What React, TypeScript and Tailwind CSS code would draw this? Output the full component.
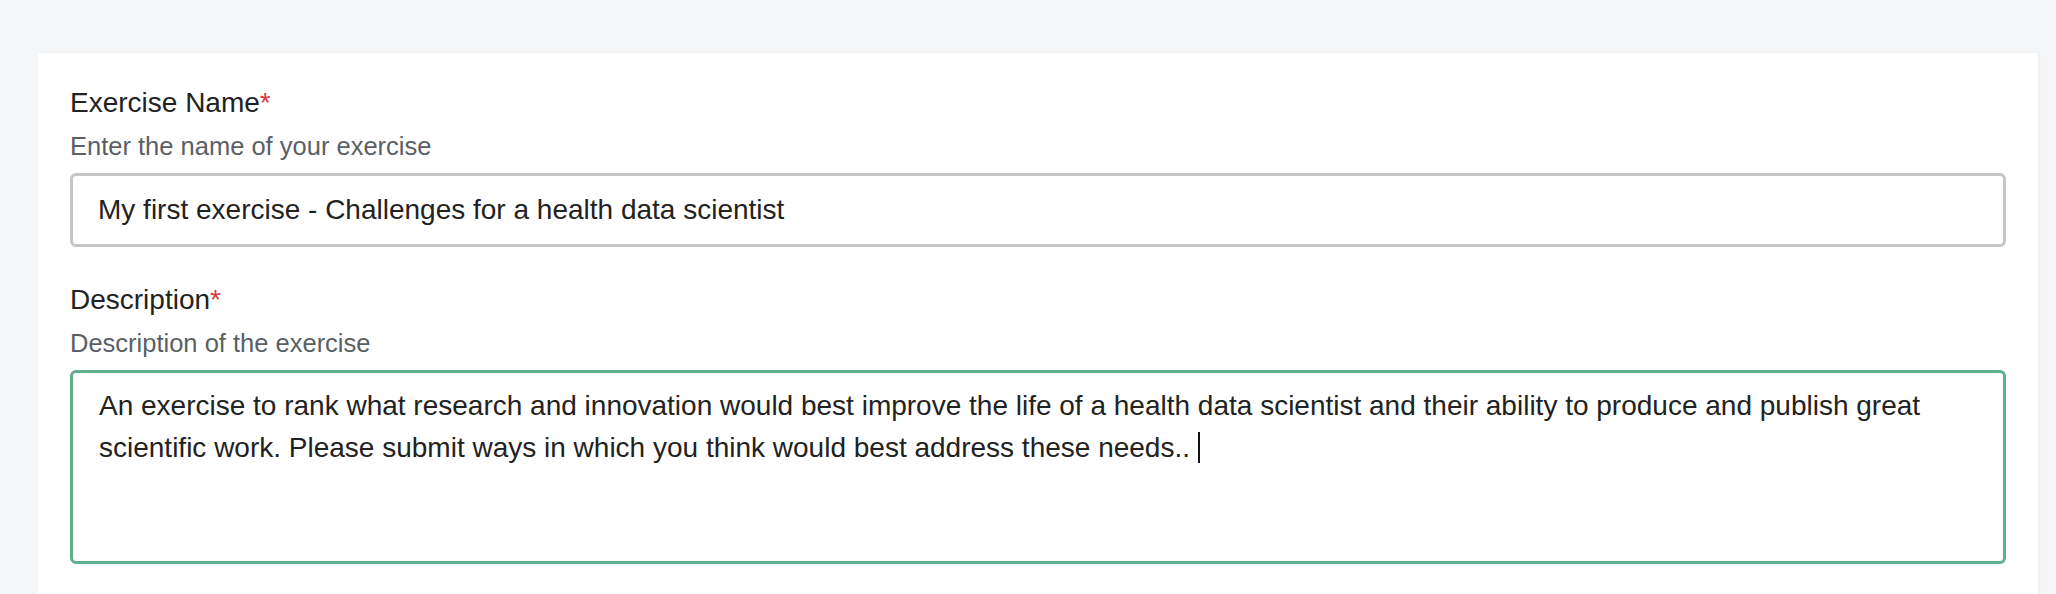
const font = { fontFamily: '"Liberation Sans", Arial, Helvetica, sans-serif' }

function FieldLabel({ label, hint }: { label: string; hint: string }) {
  return (
    <div>
      <div className="text-[28px] leading-[36px] text-[#222222]">
        {label}
        <span className="text-[#d63a3f]">*</span>
      </div>
      <div className="mt-[8px] text-[25.5px] leading-[34px] text-[#5a5f66]">
        {hint}
      </div>
    </div>
  )
}

export default function App() {
  return (
    <div
      className="h-screen overflow-hidden bg-[#f5f6f8] pt-[53px]"
      style={font}
    >
      <div className="ml-[38px] h-full w-[2000px] bg-white px-[32px] pt-[32px] shadow-[1px_0_3px_rgba(0,0,0,0.06)]">
        <FieldLabel label="Exercise Name" hint="Enter the name of your exercise" />
        <div className="mt-[10px] flex h-[74px] items-center rounded-[6px] border-[3px] border-[#c6c6c6] px-[25px] text-[28px] text-[#222222]">
          My first exercise - Challenges for a health data scientist
        </div>

        <div className="mt-[35px]">
          <FieldLabel label="Description" hint="Description of the exercise" />
        </div>
        <div className="mt-[10px] h-[194px] rounded-[6px] border-[3px] border-[#5fae8c] pl-[26px] pr-[20px] pt-[13px] text-[28px] leading-[40px] text-[#222222]">
          An exercise to rank what research and innovation would best improve the
          life of a health data scientist and their ability to produce and publish
          great scientific work. Please submit ways in which you think would best
          address these needs..{" "}
          <span className="inline-block h-[31px] w-[2px] translate-y-[6px] bg-[#111111]" />
        </div>
      </div>
    </div>
  )
}
